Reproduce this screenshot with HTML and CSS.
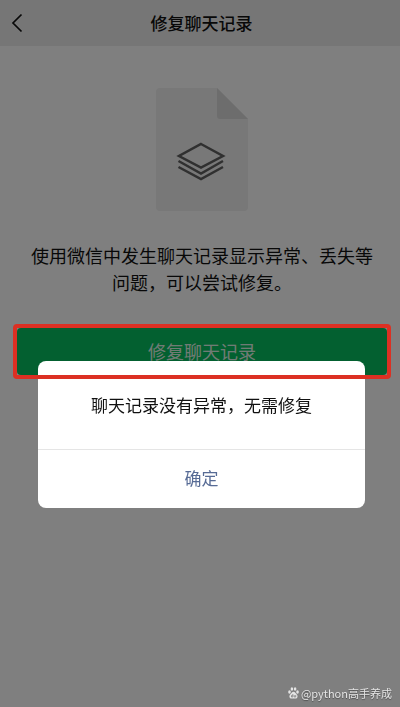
FILE: index.html
```html
<!DOCTYPE html>
<html lang="zh-CN">
<head>
  <meta charset="UTF-8" />
  <meta name="viewport" content="width=device-width, initial-scale=1" />
  <title>修复聊天记录</title>
  <link rel="stylesheet" href="styles.css">
</head>
<body>
  <header class="navbar">
    <button class="back" type="button" aria-label="返回">
      <svg width="12" height="20" viewBox="0 0 12 20" fill="none" stroke="#111" stroke-width="1.7">
        <path d="M10.5 1.5 2 10l8.5 8.5" />
      </svg>
    </button>
    <h1>修复聊天记录</h1>
  </header>

  <main class="repair">
    <svg class="file-icon" width="92" height="123" viewBox="0 0 92 123">
      <path d="M4 0h57l31 31v88a4 4 0 0 1-4 4H4a4 4 0 0 1-4-4V4a4 4 0 0 1 4-4z" fill="#f0f0f0" />
      <path d="M61 0l31 31H64a3 3 0 0 1-3-3z" fill="#dadada" />
      <g fill="none" stroke="#606060" stroke-width="2.5">
        <path d="M45 56 67 68 45 79.500 23 68z" />
        <path d="M22.500 73 45 85.500 67 73" />
        <path d="M22.500 79 45 91 67 79" />
      </g>
    </svg>
    <p class="tip">使用微信中发生聊天记录显示异常、丢失等问题，可以尝试修复。</p>
    <div class="action">
      <button class="repair-btn" type="button">修复聊天记录</button>
      <span class="frame"></span>
    </div>
  </main>

  <div class="mask">
    <div class="dialog" role="dialog" aria-modal="true" aria-labelledby="dialogText">
      <p id="dialogText" class="dialog-text">聊天记录没有异常，无需修复</p>
      <button class="dialog-btn" type="button">确定</button>
    </div>
  </div>

  <div class="watermark">
    <svg width="11" height="12" viewBox="0 0 11 12" fill="#e4e4e4">
      <ellipse cx="1.500" cy="5" rx="1.300" ry="1.700" />
      <ellipse cx="3.900" cy="2" rx="1.300" ry="1.800" />
      <ellipse cx="7.100" cy="2" rx="1.300" ry="1.800" />
      <ellipse cx="9.500" cy="5" rx="1.300" ry="1.700" />
      <path d="M5.500 4.800c1.400 0 1.900 1.400 3 2.400 1.700 1.500 1.300 4.300-.9 4.300H3.400c-2.200 0-2.600-2.800-.9-4.300 1.100-1 1.600-2.400 3-2.400z" />
      <path d="M4.800 7v3H3.500V8.500h1M6.200 8v2h1.500V8" fill="none" stroke="#777" stroke-width=".7" />
    </svg>
    <span>@python高手养成</span>
  </div>
</body>
</html>
```
FILE: styles.css
```css
* {
  margin: 0;
  padding: 0;
  box-sizing: border-box;
}

body {
  font-family: 'Noto Sans CJK SC', sans-serif;
  background: #fff;
  color: #111;
  min-height: 100vh;
}

button {
  border: none;
  background: none;
  font-family: inherit;
  cursor: pointer;
}

.navbar {
  display: grid;
  grid-template-columns: 40px 1fr 40px;
  align-items: center;
  height: 46px;
  padding-left: 3px;
  background: #ededed;
}

.back {
  display: flex;
  padding: 4px 8px;
}

.navbar h1 {
  font-size: 17px;
  font-weight: 500;
  line-height: 24px;
  text-align: center;
}

.repair {
  display: flex;
  flex-direction: column;
  align-items: center;
  padding: 42px 13px 24px 17px;
}

.tip {
  max-width: 352px;
  margin-top: 31px;
  font-size: 18px;
  line-height: 27px;
  text-align: center;
}

.action {
  position: relative;
  width: 100%;
  margin-top: 32px;
}

.repair-btn {
  display: block;
  width: 100%;
  height: 47px;
  border-radius: 4px;
  background: #07c160;
  color: rgba(255, 255, 255, 0.9);
  font-size: 18px;
  line-height: 27px;
}

/* red highlight, stays above the mask and the dialog */
.frame {
  position: absolute;
  inset: -4px;
  z-index: 20;
  border: 4px solid #dc3023;
  border-radius: 4px;
  pointer-events: none;
}

.mask {
  position: fixed;
  inset: 0;
  z-index: 10;
  display: flex;
  align-items: center;
  padding: 162px 35px 0 38px;
  background: rgba(0, 0, 0, 0.5);
}

.dialog {
  width: 100%;
  border-radius: 8px;
  background: #fff;
  overflow: hidden;
  text-align: center;
}

.dialog-text {
  padding: 32px 16px;
  font-size: 17px;
  line-height: 24px;
}

.dialog-btn {
  display: block;
  width: 100%;
  padding: 16px 0 18px;
  border-top: 1px solid #e5e5e5;
  color: #576b95;
  font-size: 17px;
  line-height: 24px;
}

.watermark {
  position: fixed;
  right: 8px;
  bottom: 4px;
  z-index: 30;
  display: flex;
  align-items: center;
  gap: 2px;
  color: #e4e4e4;
  font-size: 11px;
  line-height: 20px;
  text-shadow: 0 1px 1px rgba(0, 0, 0, 0.4);
}
```
